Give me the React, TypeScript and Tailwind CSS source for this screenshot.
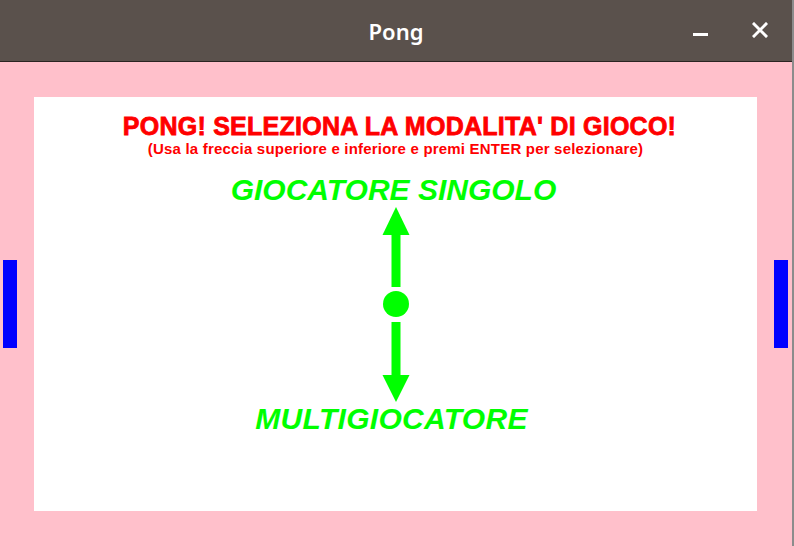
import React from "react";

const GREEN = "#00ff00";

function Paddle() {
  return <div className="h-[88px] w-[14px] bg-[#0000ff]" />;
}

function SelectorArrow() {
  return (
    <svg width="28" height="195" viewBox="0 0 28 195" className="block">
      <polygon points="14,0 27.5,28 0.5,28" fill={GREEN} />
      <rect x="9.5" y="27" width="9" height="53" fill={GREEN} />
      <circle cx="14" cy="97" r="13" fill={GREEN} />
      <rect x="9.5" y="115" width="9" height="54" fill={GREEN} />
      <polygon points="0.5,168 27.5,168 14,195" fill={GREEN} />
    </svg>
  );
}

export default function App() {
  return (
    <div className="flex h-[546px] w-[794px] overflow-hidden">
      <div className="flex w-[792px] flex-col">
        {/* Title bar */}
        <div className="relative flex h-[62px] items-center justify-center border-b border-[#2a2422] bg-[#5a514c]">
          <span
            className="text-[22px] font-semibold leading-none text-white"
            style={{ fontFamily: '"Noto Sans", sans-serif' }}
          >
            Pong
          </span>
          <div className="absolute right-[24px] top-0 flex h-full items-center gap-[44px]">
            <div className="mt-[8px] h-[3px] w-[15px] bg-white" />
            <svg width="16" height="16" viewBox="0 0 16 16" className="mt-[-2px]">
              <path d="M2 2 L14 14 M14 2 L2 14" stroke="white" strokeWidth="3" strokeLinecap="square" />
            </svg>
          </div>
        </div>

        {/* Game area */}
        <div
          className="flex flex-1 items-center bg-[#ffc0cb] pl-[3px]"
          style={{ fontFamily: '"Liberation Sans", Arial, sans-serif' }}
        >
          <Paddle />
          <div className="ml-[17px] flex h-[414px] w-[723px] flex-col items-center bg-white pt-[15px]">
            <h1 className="ml-[8px] text-[25px] font-bold leading-[28px] tracking-[0.25px] text-[#ff0000] [-webkit-text-stroke:0.8px_#ff0000]">
              PONG! SELEZIONA LA MODALITA' DI GIOCO!
            </h1>
            <p className="text-[15px] font-bold leading-[18px] tracking-[0.2px] text-[#ff0000]">
              (Usa la freccia superiore e inferiore e premi ENTER per selezionare)
            </p>
            <div className="mr-[4px] mt-[15px] text-[30px] font-bold italic leading-[34px] text-[#00ff00]">
              GIOCATORE SINGOLO
            </div>
            <SelectorArrow />
            <div className="mr-[8px] text-[30px] font-bold italic leading-[34px] tracking-[0.3px] text-[#00ff00]">
              MULTIGIOCATORE
            </div>
          </div>
          <div className="ml-[17px]">
            <Paddle />
          </div>
        </div>
      </div>
      <div className="w-[2px] bg-[#8c8c8c]" />
    </div>
  );
}
